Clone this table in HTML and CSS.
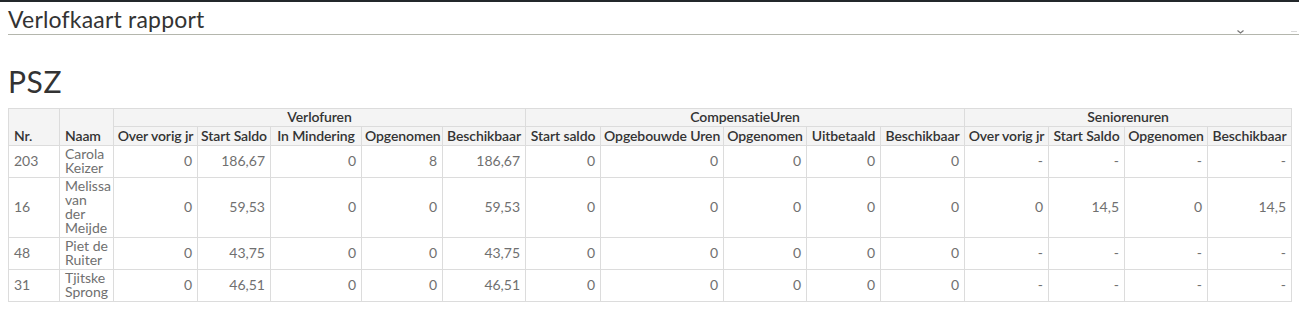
FILE: index.html
```html
<!DOCTYPE html>
<html lang="nl">
<head>
<meta charset="utf-8">
<title>Verlofkaart rapport</title>
<link rel="stylesheet" href="styles.css">
</head>
<body>
<div class="topbar"></div>
<header class="page-head">
  <h1 class="page-title">Verlofkaart rapport</h1>
  <span class="chev"><svg width="7" height="4" viewBox="0 0 7 4"><path d="M0.5 0.5 L3.5 3 L6.5 0.5" fill="none" stroke="#777" stroke-width="1.2"/></svg></span>
  <span class="dash"></span>
</header>
<main class="content">
  <h2 class="section-title">PSZ</h2>
  <table class="report">
    <colgroup>
      <col style="width:51px"><col style="width:54px">
      <col style="width:84px"><col style="width:73px"><col style="width:91px"><col style="width:81px"><col style="width:83px">
      <col style="width:75px"><col style="width:123px"><col style="width:83px"><col style="width:74px"><col style="width:84px">
      <col style="width:84px"><col style="width:76px"><col style="width:83px"><col style="width:84px">
    </colgroup>
    <thead>
      <tr class="group">
        <th rowspan="2" class="left">Nr.</th>
        <th rowspan="2" class="left">Naam</th>
        <th colspan="5">Verlofuren</th>
        <th colspan="5">CompensatieUren</th>
        <th colspan="4">Seniorenuren</th>
      </tr>
      <tr class="sub">
        <th>Over vorig jr</th><th>Start Saldo</th><th>In Mindering</th><th>Opgenomen</th><th>Beschikbaar</th>
        <th>Start saldo</th><th>Opgebouwde Uren</th><th>Opgenomen</th><th>Uitbetaald</th><th>Beschikbaar</th>
        <th>Over vorig jr</th><th>Start Saldo</th><th>Opgenomen</th><th>Beschikbaar</th>
      </tr>
    </thead>
    <tbody>
      <tr>
        <td class="left">203</td><td class="left name">Carola Keizer</td>
        <td>0</td><td>186,67</td><td>0</td><td>8</td><td>186,67</td>
        <td>0</td><td>0</td><td>0</td><td>0</td><td>0</td>
        <td>-</td><td>-</td><td>-</td><td>-</td>
      </tr>
      <tr>
        <td class="left">16</td><td class="left name">Melissa van der Meijde</td>
        <td>0</td><td>59,53</td><td>0</td><td>0</td><td>59,53</td>
        <td>0</td><td>0</td><td>0</td><td>0</td><td>0</td>
        <td>0</td><td>14,5</td><td>0</td><td>14,5</td>
      </tr>
      <tr>
        <td class="left">48</td><td class="left name">Piet de Ruiter</td>
        <td>0</td><td>43,75</td><td>0</td><td>0</td><td>43,75</td>
        <td>0</td><td>0</td><td>0</td><td>0</td><td>0</td>
        <td>-</td><td>-</td><td>-</td><td>-</td>
      </tr>
      <tr>
        <td class="left">31</td><td class="left name">Tjitske Sprong</td>
        <td>0</td><td>46,51</td><td>0</td><td>0</td><td>46,51</td>
        <td>0</td><td>0</td><td>0</td><td>0</td><td>0</td>
        <td>-</td><td>-</td><td>-</td><td>-</td>
      </tr>
    </tbody>
  </table>
</main>
</body>
</html>
```

FILE: styles.css
```css
html, body {
  margin: 0;
  padding: 0;
  background: #fff;
  font-family: Lato, "Open Sans", "Liberation Sans", sans-serif;
  color: #333;
}

.topbar {
  height: 2px;
  background: #23282b;
}

.page-head {
  position: relative;
  margin-left: 8px;
  height: 32px;
  border-bottom: 1px solid #b4b6ad;
  display: flex;
  align-items: flex-end;
}

.page-title {
  margin: 0 0 2px 0;
  font-size: 23px;
  font-weight: 400;
  line-height: 26px;
  color: #333;
  letter-spacing: 0.2px;
}

.chev {
  position: absolute;
  left: 1229px;
  bottom: 0;
  line-height: 0;
}

.dash {
  position: absolute;
  right: 2px;
  bottom: 2px;
  width: 6px;
  height: 1px;
  background: #d8d8d8;
}

.content {
  padding: 0 8px;
}

.section-title {
  margin: 28px 0 9px 0;
  font-size: 30px;
  line-height: 36px;
  font-weight: 400;
  color: #333;
  letter-spacing: 0.6px;
}

.report {
  width: 1283px;
  table-layout: fixed;
  border-collapse: collapse;
  font-size: 14px;
  line-height: 14px;
}

.report th,
.report td {
  border: 1px solid #dcdcdc;
  padding: 1px 5px 2px 5px;
  overflow: hidden;
  white-space: nowrap;
}

.report th {
  background: #f4f4f4;
  color: #333;
  font-weight: 600;
  text-align: center;
  padding-left: 3px;
  padding-right: 3px;
  letter-spacing: -0.1px;
}

.report .sub th {
  padding-top: 2px;
  padding-bottom: 2px;
}

.report th.left {
  text-align: left;
  vertical-align: bottom;
  padding-left: 5px;
  padding-bottom: 2px;
}

.report td {
  color: #707070;
  text-align: right;
  vertical-align: middle;
}

.report td.left {
  text-align: left;
}

.report td.name {
  white-space: normal;
  overflow: visible;
  padding-right: 4px;
}
```
